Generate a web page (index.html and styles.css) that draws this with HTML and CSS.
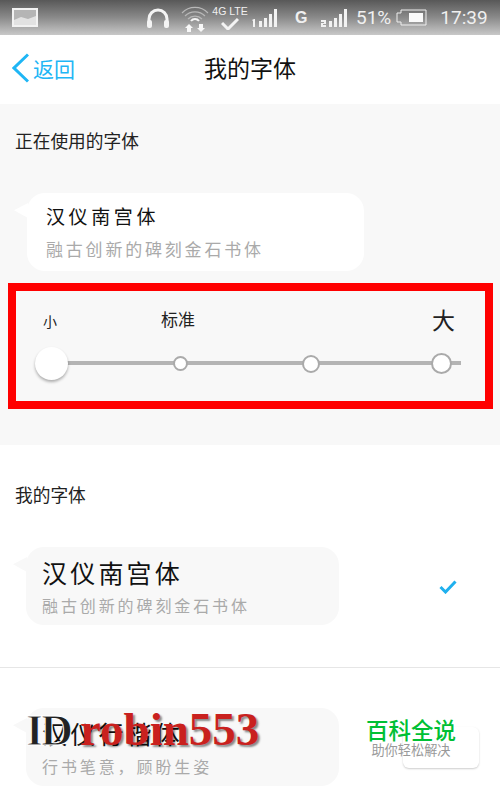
FILE: index.html
```html
<!DOCTYPE html>
<html lang="zh">

<head>
    <meta charset="UTF-8">
    <meta name="viewport" content="width=device-width, initial-scale=1.0">
    <title>我的字体</title>
    <link rel="stylesheet" href="styles.css">
</head>

<body>
    <div class="page">
        <div class="status">
            <svg class="ic-pic" width="26" height="19" viewBox="0 0 26 19">
                <rect x="1" y="1" width="24" height="17" fill="#b5b5b5" stroke="#f2f2f2" stroke-width="2" />
                <path d="M2 12 L9 9 L16 11 L24 8 V17 H2 Z" fill="#e2e2e2" />
            </svg>
            <svg class="ic-head" width="24" height="20" viewBox="0 0 24 20">
                <path d="M3 15 V11 A9 9 0 0 1 21 11 V15" fill="none" stroke="#f4f4f4" stroke-width="3" />
                <rect x="1" y="12" width="5" height="8" rx="2" fill="#f4f4f4" />
                <rect x="18" y="12" width="5" height="8" rx="2" fill="#f4f4f4" />
            </svg>
            <svg class="ic-wifi" width="28" height="28" viewBox="0 0 28 28">
                <g fill="none" stroke="#b8b8b8" stroke-width="1.2">
                    <path d="M1 9 A18 18 0 0 1 27 9" />
                    <path d="M4 12 A14 14 0 0 1 24 12" />
                    <path d="M7 15 A10 10 0 0 1 21 15" />
                </g>
                <path d="M10 17 A5 5 0 0 1 18 17" fill="none" stroke="#f4f4f4" stroke-width="2" />
                <path d="M8 20 L12 24 H10 V28 H6 V24 H4 Z" fill="#f8f8f8" />
                <path d="M20 28 L16 24 H18 V20 H22 V24 H24 Z" fill="#f8f8f8" />
            </svg>
            <div class="net">
                <span class="net-text">4G LTE</span>
                <svg width="18" height="13" viewBox="0 0 18 13">
                    <path d="M1 6 L7 12 L17 2" fill="none" stroke="#f4f4f4" stroke-width="3" />
                </svg>
            </div>
            <svg class="ic-sig1" width="26" height="18" viewBox="0 0 26 18">
                <path d="M0 11 L2 10 H3 V18 H1 V12 Z M7 12 h3 v6 h-3 Z M12 9 h3 v9 h-3 Z M17 5 h3 v13 h-3 Z M22 0 h3 v18 h-3 Z" fill="#f2f2f2" />
            </svg>
            <span class="g-mark">G</span>
            <svg class="ic-sig2" width="27" height="18" viewBox="0 0 27 18">
                <path d="M0 11 h5 v4 h-3 v1 h3 v2 h-5 v-4 h3 v-1 h-3 Z M8 12 h3 v6 h-3 Z M13 9 h3 v9 h-3 Z M18 5 h3 v13 h-3 Z M23 0 h3 v18 h-3 Z" fill="#f2f2f2" />
            </svg>
            <span class="pct">51%</span>
            <svg class="ic-batt" width="31" height="17" viewBox="0 0 31 17">
                <path d="M5 1 H30 V16 H5 V13 H1 V4 H5 Z" fill="none" stroke="#eee" stroke-width="1" />
                <rect x="13" y="4" width="14" height="9" fill="#fafafa" />
            </svg>
            <span class="clock">17:39</span>
        </div>

        <div class="nav">
            <a class="back" href="#">
                <svg width="17" height="30" viewBox="0 0 17 30">
                    <path d="M16 1.5 L2 15 L16 28.5" fill="none" stroke="#1fb6f5" stroke-width="3" />
                </svg>
                <span>返回</span>
            </a>
            <div class="nav-title">我的字体</div>
        </div>

        <div class="current-sec">
            <div class="sec-label">正在使用的字体</div>
            <div class="bubble bubble-white">
                <div class="font-name">汉仪南宫体</div>
                <div class="font-desc">融古创新的碑刻金石书体</div>
            </div>
            <div class="size-box">
                <div class="size-labels">
                    <span class="sz-s">小</span>
                    <span class="sz-m">标准</span>
                    <span class="sz-l">大</span>
                </div>
                <div class="track">
                    <span class="thumb"></span>
                    <span class="dot dot-1"></span>
                    <span class="dot dot-2"></span>
                    <span class="dot dot-3"></span>
                </div>
            </div>
        </div>

        <div class="mine-sec">
            <div class="sec-label">我的字体</div>
            <div class="font-row">
                <div class="bubble bubble-grey">
                    <div class="font-name">汉仪南宫体</div>
                    <div class="font-desc">融古创新的碑刻金石书体</div>
                </div>
                <svg class="tick" width="18" height="14" viewBox="0 0 18 14">
                    <path d="M1.5 7 L6.5 12 L16.5 1.5" fill="none" stroke="#1fb0ee" stroke-width="3" />
                </svg>
            </div>
            <div class="row-line"></div>
            <div class="font-row">
                <div class="bubble bubble-grey">
                    <div class="font-name">汉仪行楷体</div>
                    <div class="font-desc">行书笔意，顾盼生姿</div>
                </div>
            </div>
        </div>

        <div class="mark-id"><span class="mark-black">ID</span><span class="mark-red">robin553</span></div>
        <div class="float-btn"></div>
        <div class="mark-brand">
            <div class="brand-name">百科全说</div>
            <div class="brand-sub">助你轻松解决</div>
        </div>
    </div>
</body>

</html>
```

FILE: styles.css
```css
* {
    margin: 0;
    padding: 0;
    box-sizing: border-box;
}

body {
    font-family: "Noto Sans CJK SC", "Liberation Sans", sans-serif;
    background-color: #fff;
}

.page {
    position: relative;
    width: 500px;
    height: 790px;
    overflow: hidden;
}

/* status bar */
.status {
    display: flex;
    align-items: center;
    height: 35px;
    padding-left: 12px;
    background: linear-gradient(#585858, #8a8a8a 50%, #c8c8c8);
    color: #f0f0f0;
}

.ic-head {
    margin-left: 108px;
}

.ic-wifi {
    margin-left: 11px;
}

.net {
    display: flex;
    flex-direction: column;
    align-items: center;
    width: 34px;
    margin-left: 4px;
}

.net-text {
    font-family: "Liberation Sans", sans-serif;
    font-size: 10.5px;
    line-height: 11px;
    white-space: nowrap;
}

.ic-sig1 {
    margin-left: 5px;
}

.g-mark {
    width: 12px;
    margin-left: 17px;
    font-family: "Liberation Sans", sans-serif;
    font-size: 16px;
    font-weight: bold;
}

.ic-sig2 {
    margin-left: 14px;
}

.pct {
    margin-left: 8px;
    font-family: "Roboto", sans-serif;
    font-size: 19px;
}

.ic-batt {
    margin-left: 5px;
}

.clock {
    margin-left: 13px;
    font-family: "Roboto", sans-serif;
    font-size: 19px;
}

/* nav */
.nav {
    position: relative;
    display: flex;
    justify-content: center;
    align-items: center;
    height: 69px;
    padding-bottom: 6px;
    background-color: #fff;
}

.back {
    position: absolute;
    left: 12px;
    top: 18px;
    display: flex;
    align-items: center;
    gap: 4px;
    color: #1fb6f5;
    font-size: 21px;
    line-height: 30px;
    text-decoration: none;
}

.nav-title {
    font-size: 23px;
    line-height: 30px;
    color: #111;
}

/* sections */
.current-sec {
    height: 341px;
    padding-top: 25px;
    background-color: #f8f8f8;
}

.mine-sec {
    padding-top: 38px;
}

.sec-label {
    padding-left: 15px;
    font-size: 17.7px;
    line-height: 22px;
    color: #222;
}

.bubble {
    position: relative;
    height: 78px;
    border-radius: 18px;
}

.bubble::before {
    content: "";
    position: absolute;
    left: -13px;
    top: 10px;
    width: 14px;
    height: 15px;
    background-color: inherit;
    clip-path: polygon(100% 0, 0 48%, 100% 100%);
}

.bubble-white {
    width: 337px;
    margin: 42px 0 0 27px;
    padding: 9px 0 0 19px;
    background-color: #fff;
}

.bubble-grey {
    width: 313px;
    padding: 7px 0 0 16px;
    background-color: #f8f8f8;
}

.font-name {
    color: #111;
    white-space: nowrap;
}

.font-desc {
    color: #aaa;
    white-space: nowrap;
}

.bubble-white .font-name {
    font-size: 19px;
    line-height: 28px;
    letter-spacing: 3.6px;
}

.bubble-white .font-desc {
    margin-top: 7px;
    font-size: 17px;
    line-height: 24px;
    letter-spacing: 2.8px;
}

.bubble-grey .font-name {
    font-size: 25px;
    line-height: 36px;
    letter-spacing: 3.2px;
}

.bubble-grey .font-desc {
    margin-top: 4px;
    font-size: 16px;
    line-height: 22px;
    letter-spacing: 2.9px;
}

/* red frame with the size slider */
.size-box {
    width: 485px;
    height: 126px;
    margin: 12px 0 0 8px;
    border: 8px solid #f00;
}

.size-labels {
    position: relative;
    height: 56px;
}

.size-labels span {
    position: absolute;
    color: #222;
    white-space: nowrap;
}

.sz-s {
    left: 27px;
    top: 20px;
    font-size: 14px;
    line-height: 20px;
}

.sz-m {
    left: 145px;
    top: 16px;
    font-size: 17px;
    line-height: 24px;
}

.sz-l {
    left: 416px;
    top: 12px;
    font-size: 23px;
    line-height: 32px;
}

.track {
    position: relative;
    display: flex;
    align-items: center;
    height: 33px;
    margin-left: 19px;
}

.track::before {
    content: "";
    position: absolute;
    left: 20px;
    top: 14px;
    width: 406px;
    height: 4px;
    background-color: #b4b4b4;
}

.track span {
    position: relative;
    flex: none;
    border-radius: 50%;
    background-color: #fff;
}

.thumb {
    width: 33px;
    height: 33px;
    box-shadow: 0 2px 3px rgba(0, 0, 0, 0.3);
}

.dot {
    border: 2px solid #aaa;
}

.dot-1 {
    width: 15px;
    height: 15px;
    margin-left: 105px;
}

.dot-2 {
    width: 18px;
    height: 18px;
    margin-left: 114px;
}

.dot-3 {
    width: 21px;
    height: 21px;
    margin-left: 111px;
}

/* font list */
.font-row {
    display: flex;
    align-items: center;
    height: 78px;
    margin-top: 42px;
    padding-left: 26px;
}

.tick {
    margin-left: 100px;
    margin-top: 2px;
}

.row-line {
    height: 1px;
    margin-top: 42px;
    background-color: #e6e6e6;
}

.row-line + .font-row {
    margin-top: 40px;
}

/* things on top of the screenshot */
.mark-id {
    position: absolute;
    left: 26px;
    top: 704px;
    font-family: "Liberation Serif", serif;
    font-size: 47px;
    line-height: 50px;
    font-weight: bold;
    white-space: nowrap;
}

.mark-black {
    font-size: 45px;
    letter-spacing: -3px;
    color: #222;
    -webkit-text-stroke: 1px #fff;
}

.mark-red {
    margin-left: 10px;
    color: #c9211e;
    text-shadow: 2px 2px 2px rgba(0, 0, 0, 0.45);
}

.float-btn {
    position: absolute;
    left: 403px;
    top: 727px;
    width: 76px;
    height: 41px;
    border-radius: 6px;
    background-color: #fff;
    box-shadow: 0 1px 2px rgba(0, 0, 0, 0.2);
}

.mark-brand {
    position: absolute;
    left: 361px;
    top: 717px;
    width: 100px;
    text-align: center;
}

.brand-name {
    color: #00c034;
    font-size: 22.5px;
    line-height: 24px;
    font-weight: 500;
    white-space: nowrap;
}

.brand-sub {
    margin-top: 1px;
    color: #999;
    font-size: 13.2px;
    line-height: 16px;
    white-space: nowrap;
}
```
